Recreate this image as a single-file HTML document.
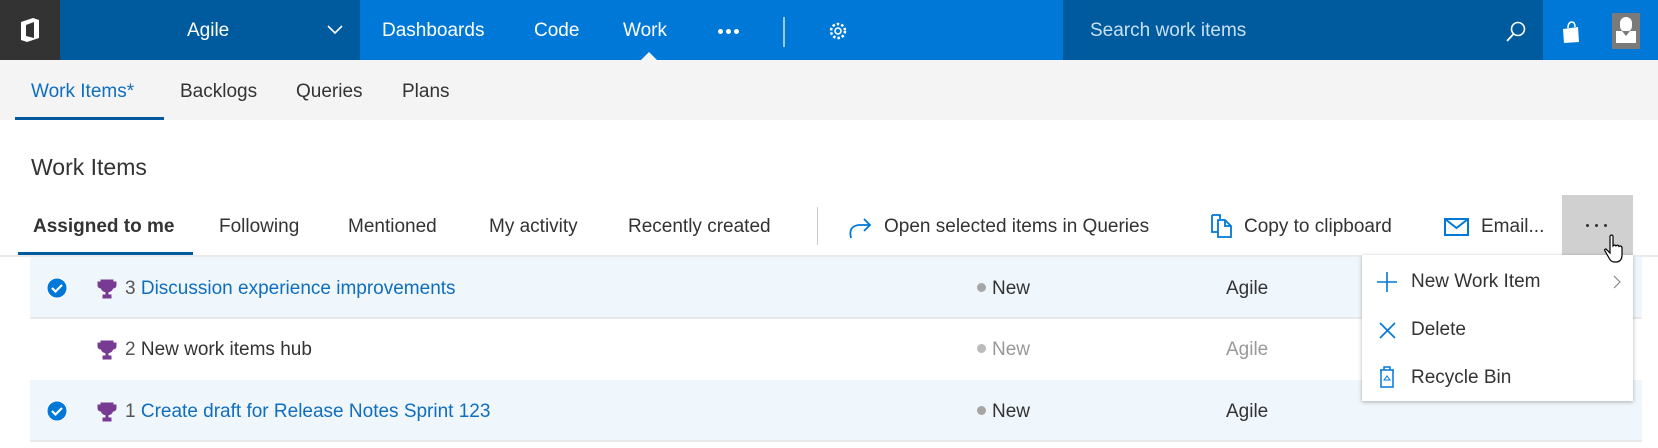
<!DOCTYPE html>
<html><head><meta charset="utf-8"><style>
*{margin:0;padding:0;box-sizing:border-box}
body{width:1658px;height:448px;overflow:hidden;background:#fff;font-family:"Liberation Sans",sans-serif;position:relative;color:#333}
.a{position:absolute;white-space:nowrap}
.t{font-size:19px;line-height:20px}
.w{color:#fff}
.dot{display:inline-block;width:9px;height:9px;border-radius:50%;background:#a6a6a6;margin-right:6px;vertical-align:2px}
</style></head><body>
<!-- top bar -->
<div class="a" style="left:0;top:0;width:1658px;height:60px;background:#0078d7"></div>
<div class="a" style="left:0;top:0;width:60px;height:60px;background:#333"></div>
<svg class="a" style="left:16px;top:16px" width="28" height="28" viewBox="0 0 28 28"><path d="M5 6 L17 2 L23 4 L23 22 L11 26 L5 24 Z M10 9 V20 L18 22 V6 Z" fill="#fff" fill-rule="evenodd"/></svg>
<div class="a" style="left:60px;top:0;width:300px;height:60px;background:#005a9e"></div>
<div class="a t w" style="left:187px;top:21px">Agile</div>
<svg class="a" style="left:326px;top:24px" width="18" height="12"><path d="M2 2 L9 9 L16 2" stroke="#fff" stroke-width="1.6" fill="none"/></svg>
<div class="a t w" style="left:382px;top:21px">Dashboards</div>
<div class="a t w" style="left:534px;top:21px">Code</div>
<div class="a t w" style="left:623px;top:21px">Work</div>
<div class="a" style="left:641px;top:52px;width:0;height:0;border-left:8px solid transparent;border-right:8px solid transparent;border-bottom:8px solid #f4f4f4"></div>
<div class="a" style="left:718px;top:29px;width:5px;height:5px;border-radius:50%;background:#fff;box-shadow:8px 0 #fff,16px 0 #fff"></div>
<div class="a" style="left:783px;top:17px;width:2px;height:30px;background:#9cc6ea"></div>
<svg class="a" style="left:828px;top:21px" width="20" height="20" viewBox="0 0 20 20"><circle cx="10" cy="10" r="3" stroke="#fff" stroke-width="1.6" fill="none"/><circle cx="10" cy="10" r="7" stroke="#fff" stroke-width="2.5" stroke-dasharray="2.5 2" fill="none"/></svg>
<div class="a" style="left:1063px;top:0;width:480px;height:60px;background:#005a9e"></div>
<div class="a t" style="left:1090px;top:21px;color:#c7e0f4">Search work items</div>
<svg class="a" style="left:1505px;top:20px" width="22" height="24"><circle cx="13" cy="9" r="6.5" stroke="#fff" stroke-width="1.6" fill="none"/><path d="M8.5 14 L2 21" stroke="#fff" stroke-width="1.8"/></svg>
<svg class="a" style="left:1560px;top:20px" width="22" height="24"><path d="M3 9 L18 7 L19 22 L4 23 Z" fill="#fff"/><path d="M8 8 Q8 2 12 2 Q15 2 15 7" stroke="#fff" stroke-width="1.5" fill="none"/></svg>
<div class="a" style="left:1612px;top:13px;width:28px;height:36px;background:#7a7a7a"></div>
<div class="a" style="left:1620px;top:17px;width:12px;height:15px;border-radius:6px;background:#fff"></div>
<div class="a" style="left:1616px;top:31px;width:20px;height:12px;background:#fff"></div>
<div class="a" style="left:1622px;top:31px;width:8px;height:5px;background:#7a7a7a;clip-path:polygon(0 0,100% 0,50% 100%)"></div>
<!-- sub nav -->
<div class="a" style="left:0;top:60px;width:1658px;height:60px;background:#f4f4f4"></div>
<div class="a t" style="left:31px;top:82px;color:#106ebe">Work Items*</div>
<div class="a t" style="left:180px;top:82px">Backlogs</div>
<div class="a t" style="left:296px;top:82px">Queries</div>
<div class="a t" style="left:402px;top:82px">Plans</div>
<div class="a" style="left:15px;top:117px;width:149px;height:3px;background:#005a9e"></div>
<!-- title -->
<div class="a" style="left:31px;top:154px;font-size:23px;line-height:26px;color:#333">Work Items</div>
<!-- tabs -->
<div class="a t" style="left:33px;top:217px;font-weight:bold;color:#333">Assigned to me</div>
<div class="a t" style="left:219px;top:217px">Following</div>
<div class="a t" style="left:348px;top:217px">Mentioned</div>
<div class="a t" style="left:489px;top:217px">My activity</div>
<div class="a t" style="left:628px;top:217px">Recently created</div>
<div class="a" style="left:817px;top:207px;width:1px;height:38px;background:#ccc"></div>
<svg class="a" style="left:847px;top:214px" width="26" height="26"><path d="M4 24 Q1 12 12 11 L23 11 M17 5 L23 11 L17 17" stroke="#0078d7" stroke-width="1.8" fill="none"/></svg>
<div class="a t" style="left:884px;top:217px">Open selected items in Queries</div>
<svg class="a" style="left:1210px;top:213px" width="24" height="26"><path d="M2 2 H10 V6 M2 2 V19 H8" stroke="#0078d7" stroke-width="1.8" fill="none"/><path d="M8 7 H15 L21 13 V24 H8 Z M15 7 V13 H21" stroke="#0078d7" stroke-width="1.8" fill="none"/></svg>
<div class="a t" style="left:1244px;top:217px">Copy to clipboard</div>
<svg class="a" style="left:1444px;top:218px" width="26" height="18"><rect x="1" y="1" width="23" height="16" stroke="#0078d7" stroke-width="2" fill="none"/><path d="M1 1 L12.5 10 L24 1" stroke="#0078d7" stroke-width="2" fill="none"/></svg>
<div class="a t" style="left:1481px;top:217px">Email...</div>
<div class="a" style="left:1562px;top:195px;width:71px;height:60px;background:#d0d0d0"></div>
<div class="a" style="left:1586px;top:224px;width:3px;height:3px;border-radius:50%;background:#333;box-shadow:9px 0 #333,18px 0 #333"></div>
<div class="a" style="left:18px;top:252px;width:175px;height:3px;background:#005a9e"></div>
<div class="a" style="left:0;top:255px;width:1658px;height:2px;background:#eaeaea"></div>
<!-- rows -->
<div class="a" style="left:30px;top:257px;width:1612px;height:60px;background:#eff6fc"></div>
<div class="a" style="left:30px;top:317px;width:1612px;height:2px;background:#e8e8e8"></div>
<div class="a" style="left:30px;top:380px;width:1612px;height:60px;background:#eff6fc"></div>
<div class="a" style="left:30px;top:440px;width:1612px;height:2px;background:#e8e8e8"></div>
<svg class="a" style="left:46px;top:277px" width="22" height="22"><circle cx="11" cy="11" r="10" fill="#0078d7" stroke="#fff" stroke-width="1"/><path d="M6 11 L9.5 14.5 L16 8" stroke="#fff" stroke-width="2.2" fill="none"/></svg>
<svg class="a" style="left:46px;top:400px" width="22" height="22"><circle cx="11" cy="11" r="10" fill="#0078d7" stroke="#fff" stroke-width="1"/><path d="M6 11 L9.5 14.5 L16 8" stroke="#fff" stroke-width="2.2" fill="none"/></svg>
<svg class="a" style="left:97px;top:279px" width="20" height="20" viewBox="0 0 20 20"><path d="M4 1 H16 V7 Q16 12 11 13 V16 H14 V19 H6 V16 H9 V13 Q4 12 4 7 Z M4 3 H1 V6 Q1 9 4 9 M16 3 H19 V6 Q19 9 16 9" fill="#773b93" stroke="#773b93" stroke-width="1"/></svg>
<svg class="a" style="left:97px;top:340px" width="20" height="20" viewBox="0 0 20 20"><path d="M4 1 H16 V7 Q16 12 11 13 V16 H14 V19 H6 V16 H9 V13 Q4 12 4 7 Z M4 3 H1 V6 Q1 9 4 9 M16 3 H19 V6 Q19 9 16 9" fill="#773b93" stroke="#773b93" stroke-width="1"/></svg>
<svg class="a" style="left:97px;top:402px" width="20" height="20" viewBox="0 0 20 20"><path d="M4 1 H16 V7 Q16 12 11 13 V16 H14 V19 H6 V16 H9 V13 Q4 12 4 7 Z M4 3 H1 V6 Q1 9 4 9 M16 3 H19 V6 Q19 9 16 9" fill="#773b93" stroke="#773b93" stroke-width="1"/></svg>
<div class="a t" style="left:125px;top:279px;color:#555">3 <span style="color:#106ebe">Discussion experience improvements</span></div>
<div class="a t" style="left:125px;top:340px;color:#555">2 <span style="color:#333">New work items hub</span></div>
<div class="a t" style="left:125px;top:402px;color:#555">1 <span style="color:#106ebe">Create draft for Release Notes Sprint 123</span></div>
<div class="a t" style="left:977px;top:279px"><span class="dot"></span>New</div>
<div class="a t" style="left:977px;top:340px;color:#999"><span class="dot" style="background:#bbb"></span>New</div>
<div class="a t" style="left:977px;top:402px"><span class="dot"></span>New</div>
<div class="a t" style="left:1226px;top:279px">Agile</div>
<div class="a t" style="left:1226px;top:340px;color:#999">Agile</div>
<div class="a t" style="left:1226px;top:402px">Agile</div>
<!-- menu -->
<div class="a" style="left:1362px;top:255px;width:271px;height:146px;background:#fff;box-shadow:0 1px 4px rgba(0,0,0,.3)"></div>
<svg class="a" style="left:1377px;top:272px" width="20" height="20"><path d="M10 0 V20 M0 10 H20" stroke="#0078d7" stroke-width="1.6"/></svg>
<div class="a t" style="left:1411px;top:272px">New Work Item</div>
<svg class="a" style="left:1612px;top:274px" width="10" height="16"><path d="M2 2 L8 8 L2 14" stroke="#888" stroke-width="1.2" fill="none"/></svg>
<svg class="a" style="left:1379px;top:322px" width="17" height="17"><path d="M1 1 L16 16 M16 1 L1 16" stroke="#0078d7" stroke-width="1.6"/></svg>
<div class="a t" style="left:1411px;top:320px">Delete</div>
<svg class="a" style="left:1379px;top:366px" width="16" height="22"><path d="M1 4 H15 M5 4 V1 H11 V4 M2 4 V21 H14 V4" stroke="#0078d7" stroke-width="1.5" fill="none"/><path d="M5 14 L8 10 L11 14 Z" stroke="#0078d7" stroke-width="1" fill="none"/></svg>
<div class="a t" style="left:1411px;top:368px">Recycle Bin</div>
<!-- cursor -->
<svg class="a" style="left:1603px;top:234px" width="24" height="30" viewBox="0 0 24 30"><path d="M7 2 Q9 0 10 2 V12 Q12 10 13 12 Q15 10 16 12.5 Q18 11 19 13.5 V21 Q19 27 14 28 H11 Q8 28 6 24 L2 17 Q1 15 3 15 L7 19 Z" fill="#fff" stroke="#000" stroke-width="1.2"/></svg>
</body></html>
